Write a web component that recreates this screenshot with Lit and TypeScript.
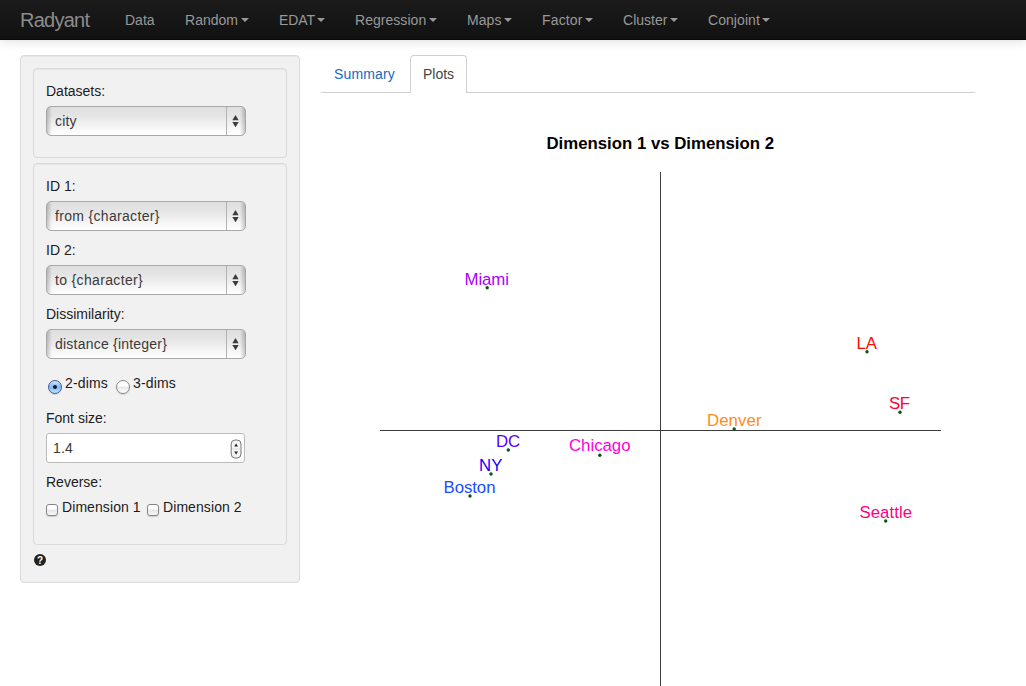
import { LitElement, html, svg, css } from "lit";
import { customElement, property } from "lit/decorators.js";
import { classMap } from "lit/directives/class-map.js";
import { styleMap } from "lit/directives/style-map.js";

const MENU = [
  { label: "Data", width: 60, spacing: 0, caret: false },
  { label: "Random", width: 94, spacing: 0.02, caret: true },
  { label: "EDAT", width: 76, spacing: -0.1, caret: true },
  { label: "Regression", width: 112, spacing: 0.04, caret: true },
  { label: "Maps", width: 75, spacing: 0.06, caret: true },
  { label: "Factor", width: 81, spacing: 0.16, caret: true },
  { label: "Cluster", width: 85, spacing: 0.02, caret: true },
  { label: "Conjoint", width: 92, spacing: 0.06, caret: true },
];

// Coordinates are relative to the plot's own origin (320, 93 in the page).
const CITIES = [
  { name: "Miami", x: 144.5, y: 192, w: 44.5, color: "#a600ff", px: 167.2, py: 194.8 },
  { name: "LA", x: 536.5, y: 256, w: 20.5, color: "#ff0a00", px: 547, py: 258.7 },
  { name: "SF", x: 569, y: 316, w: 21, color: "#ff0033", px: 580, py: 319.3 },
  { name: "Denver", x: 387, y: 333, w: 54.5, color: "#ff8c1a", px: 414.2, py: 336 },
  { name: "DC", x: 176, y: 354, w: 24, color: "#5500ff", px: 188.3, py: 357 },
  { name: "NY", x: 159, y: 378, w: 23.5, color: "#1500ff", px: 171, py: 381 },
  { name: "Boston", x: 123.5, y: 400, w: 52, color: "#1a4dff", px: 150, py: 403 },
  { name: "Chicago", x: 249, y: 358, w: 61.5, color: "#ff00d9", px: 279.8, py: 362.3 },
  { name: "Seattle", x: 539.5, y: 425, w: 52.5, color: "#ff0080", px: 565.7, py: 428 },
];

@customElement("nav-bar")
export class NavBar extends LitElement {
  static styles = css`
    :host { display: block; }
    .bar {
      display: flex; height: 40px; box-sizing: border-box; padding-left: 20px;
      background: linear-gradient(#1b1b1b, #111); border-bottom: 1px solid #080808;
      box-shadow: 0 1px 10px rgba(0, 0, 0, 0.14);
      color: #999; font-size: 14px; line-height: 40px; white-space: nowrap;
    }
    .brand { width: 105px; font-size: 20px; letter-spacing: -0.75px; color: #8c8c8c; }
    .item { display: flex; align-items: center; height: 40px; }
    .caret {
      width: 0; height: 0; margin-left: 2.5px; border-top: 4px solid #999;
      border-left: 4px solid transparent; border-right: 4px solid transparent;
    }
  `;
  render() {
    return html`<nav class="bar">
      <div class="brand">Radyant</div>
      ${MENU.map((m) => html`<div class="item" style=${styleMap({ width: `${m.width}px` })}>
        <span style=${styleMap({ letterSpacing: `${m.spacing}px` })}>${m.label}</span>
        ${m.caret ? html`<i class="caret"></i>` : ""}
      </div>`)}
    </nav>`;
  }
}

@customElement("select-field")
export class SelectField extends LitElement {
  @property() label = "";
  @property() value = "";
  @property({ type: Number }) spacing = 0;
  static styles = css`
    :host { display: block; margin-bottom: 9px; }
    .label { line-height: 20px; margin-bottom: 5px; color: #1c1c1c; }
    .box {
      display: flex; width: 200px; height: 30px; box-sizing: border-box;
      border: 1px solid #a8a8a8; border-radius: 5px; overflow: hidden;
      background:
        linear-gradient(90deg, rgba(0, 0, 0, 0.2), transparent 5px, transparent calc(100% - 5px), rgba(0, 0, 0, 0.2)),
        linear-gradient(#dfdfdf, #e4e4e4 30%, #f8f8f8 80%, #fff);
      color: #3a3a3a;
    }
    .value { flex: 1; padding-left: 8px; line-height: 28px; }
    .arrows { width: 17px; padding-right: 1px; border-left: 1px solid #b4b4b4; display: flex; align-items: center; justify-content: center; }
    .glyph { display: block; fill: #3c3c3c; }
  `;
  render() {
    return html`<div class="label">${this.label}</div>
      <div class="box">
        <span class="value" style=${styleMap({ letterSpacing: `${this.spacing}px` })}>${this.value}</span>
        <span class="arrows"><svg class="glyph" width="7" height="12" viewBox="0 0 7 12"><path d="M3.5 0 6.7 5.2H.3zM3.5 12.3 .3 7.1h6.4z" /></svg></span>
      </div>`;
  }
}

@customElement("choice-mark")
export class ChoiceMark extends LitElement {
  @property() kind = "checkbox";
  @property({ type: Boolean }) checked = false;
  static styles = css`
    :host { display: block; }
    .mark { box-sizing: border-box; display: flex; align-items: center; justify-content: center; }
    .checkbox {
      width: 12px; height: 12px; border: 1px solid #858585; border-radius: 3px;
      background: linear-gradient(#fff 40%, #e6e6e6 50%, #f8f8f8);
      box-shadow: 0 1px 1px rgba(0, 0, 0, 0.14);
    }
    .radio {
      width: 14px; height: 14px; border: 1px solid #858585; border-radius: 50%;
      background: linear-gradient(#fff 40%, #e8e8e8 52%, #fff);
      box-shadow: 0 1px 1px rgba(0, 0, 0, 0.12);
    }
    .checked { border-color: #46589b; background: linear-gradient(#d3e5f8, #82b9ee 50%, #b9e5ff); }
    .dot { width: 4px; height: 4px; border-radius: 50%; background: #111a33; }
  `;
  render() {
    return html`<div class=${classMap({ mark: true, [this.kind]: true, checked: this.checked })}>
      ${this.checked ? html`<i class="dot"></i>` : ""}
    </div>`;
  }
}

@customElement("mds-sidebar")
export class MdsSidebar extends LitElement {
  static styles = css`
    :host { display: block; }
    .well {
      box-sizing: border-box; padding: 12px; background: #f1f1f1; border: 1px solid #dadada;
      border-radius: 4px; box-shadow: inset 0 1px 1px rgba(0, 0, 0, 0.05);
    }
    .outer { width: 280px; height: 528px; }
    .data { height: 90px; margin-bottom: 5px; }
    .options { height: 382px; }
    .label { line-height: 20px; margin-bottom: 5px; }
    .row { display: flex; height: 20px; line-height: 20px; }
    .radios { margin: 14px 0 15px; padding-left: 2px; }
    .radios .icon { padding-top: 7px; height: 14px; width: 14px; flex: none; }
    .radios .text { width: 54px; padding-left: 3px; box-sizing: border-box; letter-spacing: 0.16px; }
    .checks .icon { padding-top: 7px; width: 12px; flex: none; }
    .checks .text { width: 89px; padding-left: 4px; box-sizing: border-box; white-space: nowrap; letter-spacing: 0.08px; }
    .number {
      display: flex; align-items: center; justify-content: space-between; box-sizing: border-box;
      width: 199px; height: 30px; padding: 0 2px 0 6px; margin-bottom: 9px;
      border: 1px solid #bbb; border-radius: 3px; background: #fff; color: #3a3a3a;
    }
    .amount { letter-spacing: 0.2px; }
    .stepper { display: block; margin-top: 1px; }
    .help { display: block; margin-top: 9px; }
    .q { font: bold 10px "Liberation Sans", Arial, sans-serif; fill: #fff; }
  `;
  render() {
    return html`<aside class="well outer">
      <section class="well data">
        <select-field label="Datasets:" value="city" spacing="0.15"></select-field>
      </section>
      <section class="well options">
        <select-field label="ID 1:" value="from {character}" spacing="0.32"></select-field>
        <select-field label="ID 2:" value="to {character}" spacing="0.34"></select-field>
        <select-field label="Dissimilarity:" value="distance {integer}" spacing="0.22"></select-field>
        <div class="row radios">
          <span class="icon"><choice-mark kind="radio" checked></choice-mark></span><span class="text">2-dims</span>
          <span class="icon"><choice-mark kind="radio"></choice-mark></span><span class="text">3-dims</span>
        </div>
        <div class="label">Font size:</div>
        <div class="number">
          <span class="amount">1.4</span>
          <svg class="stepper" width="12" height="20" viewBox="0 0 12 20">
            <rect x="1.2" y="1" width="9.8" height="18" rx="4" fill="#f4f4f4" stroke="#777" />
            <path d="M2 10h8.4" stroke="#ddd" />
            <path d="M6.1 4.5 8 7.5H4.2zM6.1 15.5 4.2 12.5H8z" fill="#222" />
          </svg>
        </div>
        <div class="label">Reverse:</div>
        <div class="row checks">
          <span class="icon"><choice-mark></choice-mark></span><span class="text">Dimension 1</span>
          <span class="icon"><choice-mark></choice-mark></span><span class="text">Dimension 2</span>
        </div>
      </section>
      <svg class="help" width="14" height="12" viewBox="0 0 14 12">
        <circle cx="7" cy="6" r="6" fill="#222" />
        <text class="q" x="7" y="9.6" text-anchor="middle">?</text>
      </svg>
    </aside>`;
  }
}

@customElement("mds-plot")
export class MdsPlot extends LitElement {
  static styles = css`
    :host { display: block; }
    .plot { display: block; font-family: "Liberation Sans", Arial, sans-serif; font-size: 16.8px; }
    .title { font-weight: bold; font-size: 16.8px; fill: #000; }
    .axis { fill: none; stroke: #3c3c3c; stroke-width: 1; }
    .point { fill: #0b5410; }
  `;
  render() {
    return html`<svg class="plot" width="655" height="593" viewBox="0 0 655 593">
      <text class="title" x="226.5" y="56" textLength="227.5">Dimension 1 vs Dimension 2</text>
      <path class="axis" d="M60 337.5H621M340.5 79V593" />
      ${CITIES.map((c) => svg`
        <text x=${c.x} y=${c.y} textLength=${c.w} fill=${c.color}>${c.name}</text>
        <circle class="point" cx=${c.px} cy=${c.py} r="1.7" />`)}
    </svg>`;
  }
}

@customElement("app-root")
export class AppRoot extends LitElement {
  static styles = css`
    :host {
      display: block; height: 686px; overflow: hidden; background: #fff; color: #1c1c1c;
      font-family: "Liberation Sans", Arial, sans-serif; font-size: 14px;
    }
    .page { display: flex; gap: 20px; padding: 15px 0 0 20px; }
    .main { width: 655px; }
    .tabs { display: flex; height: 38px; box-sizing: border-box; border-bottom: 1px solid #d0d0d0; margin-left: 1px; }
    .tab {
      box-sizing: border-box; height: 38px; padding: 8px 12px; line-height: 20px;
      border: 1px solid transparent; border-bottom: 0;
    }
    .summary { width: 87px; margin-right: 2px; color: #1a68bf; letter-spacing: 0.16px; }
    .plots { width: 57px; background: #fff; border-color: #d0d0d0; border-radius: 4px 4px 0 0; color: #444; }
  `;
  render() {
    return html`<nav-bar></nav-bar>
      <div class="page">
        <mds-sidebar></mds-sidebar>
        <main class="main">
          <div class="tabs">
            <div class="tab summary">Summary</div>
            <div class="tab plots">Plots</div>
          </div>
          <mds-plot></mds-plot>
        </main>
      </div>`;
  }
}
